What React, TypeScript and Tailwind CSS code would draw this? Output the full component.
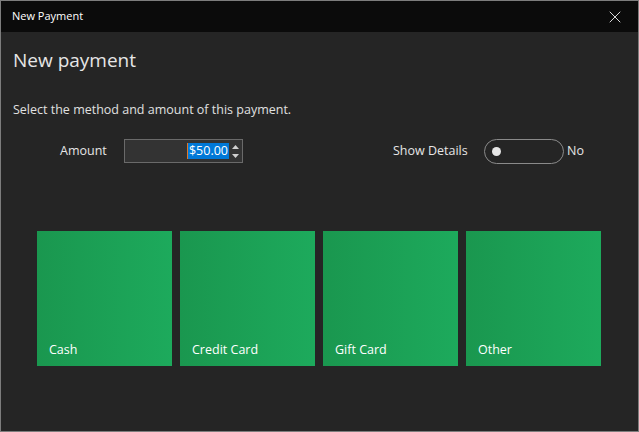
import { X } from "lucide-react";

const METHODS = ["Cash", "Credit Card", "Gift Card", "Other"];

export default function App() {
  return (
    <div className="flex h-[432px] w-[639px] flex-col border border-[#7d7d7d] bg-[#252525] font-['Open_Sans',sans-serif] text-[#e6e6e6]">
      {/* title bar */}
      <div className="flex h-[31px] shrink-0 items-center justify-between bg-[#0b0b0b] pl-[11px] pr-[13px]">
        <span className="text-[11px] text-white">New Payment</span>
        <X className="h-[20px] w-[20px] text-[#d8d8d8]" strokeWidth={1.2} />
      </div>

      <div className="flex flex-1 flex-col px-3">
        <h1 className="mt-[15px] text-[19px] font-normal leading-[26px] text-[#e6e6e6]">New payment</h1>
        <p className="mt-[28px] text-[12.5px] leading-[18px] text-[#e0e0e0]">
          Select the method and amount of this payment.
        </p>

        <div className="mt-[20px] flex h-[24px] items-center text-[12.5px]">
          <span className="ml-[47px] w-[64px]">Amount</span>
          <div className="flex h-[24px] w-[119px] items-center justify-end border border-[#6a6a6a] bg-[#333333] pr-[3px]">
            <span className="h-[16px] w-px bg-[#e0782a]" />
            <span className="bg-[#0078d7] px-px text-[12.5px] leading-[16px] text-white">$50.00</span>
            <div className="ml-[3px] flex flex-col items-center gap-[5px]">
              <svg width="7" height="4" viewBox="0 0 7 4"><path d="M0 4 L3.5 0 L7 4 Z" fill="#d0d0d0" /></svg>
              <svg width="7" height="4" viewBox="0 0 7 4"><path d="M0 0 L3.5 4 L7 0 Z" fill="#d0d0d0" /></svg>
            </div>
          </div>

          <span className="ml-[150px] w-[91px]">Show Details</span>
          <div className="flex h-[25px] w-[80px] items-center rounded-full border border-[#8a8a8a] pl-[7px]">
            <span className="h-[9px] w-[9px] rounded-full bg-[#e6e6e6]" />
          </div>
          <span className="ml-[3px]">No</span>
        </div>

        <div className="mt-[68px] flex gap-2 pl-[24px]">
          {METHODS.map((m) => (
            <button
              key={m}
              className="flex h-[135px] w-[135px] items-end bg-gradient-to-r from-[#1a974f] to-[#1daa5c] pb-[6px] pl-3 text-left text-[12.5px] text-white"
            >
              {m}
            </button>
          ))}
        </div>
      </div>
    </div>
  );
}
